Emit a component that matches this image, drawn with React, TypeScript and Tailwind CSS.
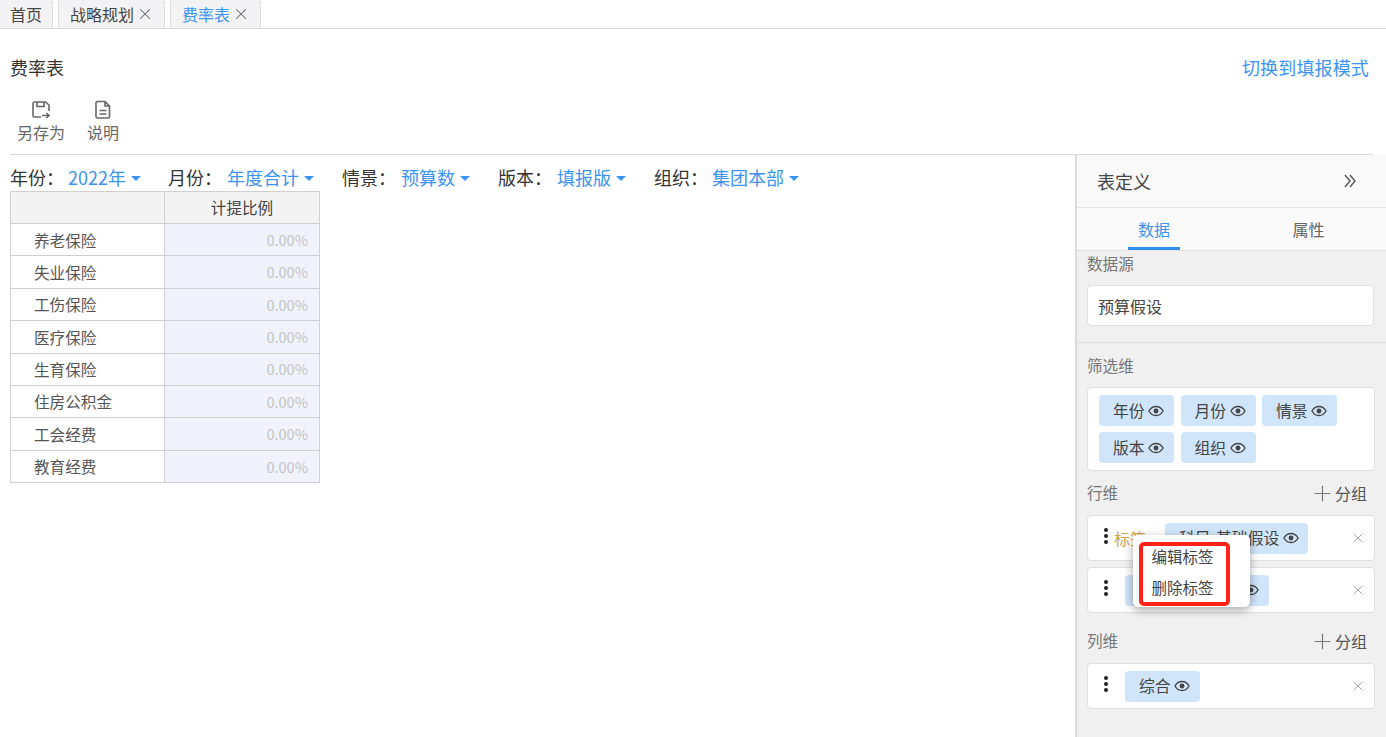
import { Plus, X } from "lucide-react";

const rows = ["养老保险", "失业保险", "工伤保险", "医疗保险", "生育保险", "住房公积金", "工会经费", "教育经费"];
const filters = [
  { label: "年份", value: "2022年", cls: "mr-[27px]", lw: "w-[58px]" },
  { label: "月份", value: "年度合计", cls: "mr-[28px]", lw: "w-[59px]" },
  { label: "情景", value: "预算数", cls: "mr-[28px]", lw: "w-[59px]" },
  { label: "版本", value: "填报版", cls: "mr-[28px]", lw: "w-[59px]" },
  { label: "组织", value: "集团本部", cls: "", lw: "w-[58px]" },
];

function EyeIcon() {
  return (
    <svg width="16" height="16" viewBox="0 0 17 17" fill="none" className="shrink-0">
      <path d="M1 8.500C2.800 5.300 5.400 3.700 8.500 3.700S14.200 5.300 16 8.500C14.200 11.700 11.600 13.300 8.500 13.300S2.800 11.700 1 8.500Z" stroke="#444" strokeWidth="1.400" />
      <circle cx="8.500" cy="8.500" r="2.600" fill="#444" />
    </svg>
  );
}

function Chip({ label, className = "" }: { label: string; className?: string }) {
  return (
    <span className={`flex h-[31px] shrink-0 items-center gap-[3.500px] rounded-[4px] bg-[#d0e5fa] pl-[14px] text-[15.800px] text-[#444] ${className}`}>
      {label}
      <EyeIcon />
    </span>
  );
}

function Dots() {
  return (
    <div className="flex w-[6px] flex-col items-center gap-[2px]">
      <i className="h-[4px] w-[4px] rounded-full bg-[#222]" />
      <i className="h-[4px] w-[4px] rounded-full bg-[#222]" />
      <i className="h-[4px] w-[4px] rounded-full bg-[#222]" />
    </div>
  );
}

function GroupHeader({ title }: { title: string }) {
  return (
    <div className="flex h-[30px] items-center justify-between pr-[8px]">
      <span className="text-[15.600px] text-[#777]">{title}</span>
      <span className="flex items-center text-[16px] text-[#555]">
        <Plus size={25} strokeWidth={1.1} className="text-[#777]" />
        分组
      </span>
    </div>
  );
}

function DimRow({ children, className = "" }: { children: React.ReactNode; className?: string }) {
  return (
    <div className={`flex h-[46px] items-center rounded-[4px] border border-[#e0e0e0] bg-white pl-[15px] pr-[8px] ${className}`}>
      <div className="mb-[5px] mr-[2px]">
        <Dots />
      </div>
      <div className="flex flex-1 items-center">{children}</div>
      <X size={16} strokeWidth={1.5} className="text-[#aaa]" />
    </div>
  );
}

export default function App() {
  return (
    <div className="relative flex h-[737px] w-[1386px] flex-col overflow-hidden bg-white font-['Noto_Sans_CJK_SC','Noto_Sans',sans-serif] text-[#444]">
      {/* tabs */}
      <div className="flex h-[29px] items-stretch border-b border-[#d9d9d9] text-[16px]">
        <div className="mr-[5px] flex w-[53px] items-center rounded-tr-[3px] border-r border-[#ddd] bg-[#f3f3f5] pl-[10px]">首页</div>
        <div className="mr-[5px] flex w-[107px] items-center gap-[2px] rounded-t-[3px] border-x border-[#ddd] bg-[#f3f3f5] pl-[11px]">
          战略规划
          <X size={18} strokeWidth={1.4} className="text-[#666]" />
        </div>
        <div className="flex w-[91px] items-center gap-[2px] rounded-t-[3px] border-x border-[#ddd] bg-[#f3f3f5] pl-[11px] text-[#3b94f0]">
          费率表
          <X size={18} strokeWidth={1.4} className="text-[#666]" />
        </div>
      </div>

      {/* title */}
      <div className="flex h-[78px] items-start justify-between pl-[10px] pr-[17px] pt-[25px] text-[18px] leading-[26px]">
        <span className="text-[#333]">费率表</span>
        <span className="tracking-[0.15px] text-[#3b94f0]">切换到填报模式</span>
      </div>

      {/* toolbar */}
      <div className="ml-[10px] mr-[13px] flex h-[48px] items-start gap-[22px] border-b border-[#d9d9d9] pl-[7px] text-[16px] leading-[22px] text-[#666]">
        <div className="flex flex-col items-center">
          <svg width="20" height="20" viewBox="0 0 20 20" fill="none" stroke="#666" strokeWidth="1.600" className="-mt-[7px] mb-[1px]">
            <path d="M10 17H3.500A1.500 1.500 0 0 1 2 15.500V3.500A1.500 1.500 0 0 1 3.500 2h11L18 5v6" />
            <path d="M6 2v4.500h7V2" />
            <path d="M11 15.500h7M15.500 13l2.500 2.500-2.500 2.500" />
          </svg>
          <span>另存为</span>
        </div>
        <div className="flex flex-col items-center">
          <svg width="20" height="20" viewBox="0 0 20 20" fill="none" stroke="#666" strokeWidth="1.600" className="-mt-[7px] mb-[1px]">
            <path d="M4.500 1.500h7.500l4.500 4.500v10.500a1.500 1.500 0 0 1-1.500 1.500H4.500A1.500 1.500 0 0 1 3 16.500v-13.500a1.500 1.500 0 0 1 1.500-1.500z" />
            <path d="M12 1.500V6h4.500M6.500 10.500h7M6.500 14h7" />
          </svg>
          <span>说明</span>
        </div>
      </div>

      {/* body */}
      <div className="flex min-h-0 flex-1">
        <div className="flex-1 pl-[10px]">
          <div className="flex h-[36px] items-center pt-[8px] text-[18px]">
            {filters.map((f) => (
              <div key={f.label} className={`flex items-center ${f.cls}`}>
                <span className={`${f.lw} text-[#333]`}>{f.label}：</span>
                <span className="text-[#3b94f0]">{f.value}</span>
                <span className="ml-[5px] mt-[2px] h-0 w-0 border-x-[5px] border-t-[5px] border-x-transparent border-t-[#3b94f0]" />
              </div>
            ))}
          </div>
          <div className="grid w-[310px] grid-cols-[154px_155px] border-l border-t border-[#d0d0d0]">
            <div className="h-[32px] border-b border-r border-[#d0d0d0] bg-[#f3f3f3]" />
            <div className="flex h-[32px] items-center justify-center border-b border-r border-[#d0d0d0] bg-[#f3f3f3] text-[15.600px]">计提比例</div>
            {rows.map((r) => (
              <div key={r} className="contents">
                <div className="flex h-[32.400px] items-center border-b border-r border-[#d0d0d0] pl-[23px] pt-[1px] text-[15.600px] text-[#555]">{r}</div>
                <div className="flex h-[32.400px] items-center justify-end border-b border-r border-[#d0d0d0] bg-[#f0f3fc] pr-[11px] text-[14.500px] text-[#c4c4c4]">0.00%</div>
              </div>
            ))}
          </div>
        </div>

        {/* side panel */}
        <div className="flex w-[311px] flex-col border-l-2 border-[#dcdcdc] bg-[#f0f0f0]">
          <div className="flex h-[53px] items-center justify-between border-b border-[#e2e2e2] bg-[#f9f9f9] pl-[20px] pr-[30px] text-[18px] text-[#444]">
            表定义
            <svg width="12" height="14" viewBox="0 0 12 14" fill="none" stroke="#555" strokeWidth="1.400">
              <path d="M1 1l5 6-5 6M6 1l5 6-5 6" />
            </svg>
          </div>
          <div className="flex h-[43px] border-b border-[#e2e2e2] bg-[#fafafa] text-[16px]">
            <div className="relative flex w-[154px] items-center justify-center text-[#3b94f0]">
              数据
              <span className="absolute bottom-0 left-[51px] h-[3px] w-[52px] bg-[#2f8fee]" />
            </div>
            <div className="flex flex-1 items-center justify-center text-[#666]">属性</div>
          </div>
          <div className="border-b border-[#dcdcdc] px-[10px] pb-[16px]">
            <div className="h-[34px] text-[15.600px] leading-[25px] text-[#777]">数据源</div>
            <div className="flex h-[41px] w-[287px] items-center rounded-[4px] border border-[#e0e0e0] bg-white pl-[10px] pt-[1px] text-[16px]">预算假设</div>
          </div>
          <div className="px-[10px] pr-[11px]">
            <div className="flex h-[44px] items-center pt-[2px] text-[15.600px] text-[#777]">筛选维</div>
            <div className="flex h-[84px] flex-wrap content-start gap-x-[6.500px] gap-y-[6px] rounded-[4px] border border-[#e0e0e0] bg-white pl-[11px] pt-[7px]">
              <Chip label="年份" className="w-[75px]" />
              <Chip label="月份" className="w-[75px]" />
              <Chip label="情景" className="w-[75px]" />
              <Chip label="版本" className="w-[75px]" />
              <Chip label="组织" className="w-[75px]" />
            </div>
            <div className="mt-[7px]">
              <GroupHeader title="行维" />
            </div>
            <DimRow className="mt-[7px]">
              <span className="ml-[3px] w-[51px] shrink-0 text-[16px] text-[#cfa24a]">标签:</span>
              <Chip label="科目-基础假设" className="w-[143px]" />
            </DimRow>
            <DimRow className="mt-[6px]">
              <Chip label="科目-计提比例" className="ml-[14px] w-[144px]" />
            </DimRow>
            <div className="mt-[13px]">
              <GroupHeader title="列维" />
            </div>
            <DimRow className="mt-[7px]">
              <Chip label="综合" className="ml-[14px] w-[75px]" />
            </DimRow>
          </div>
        </div>
      </div>

      {/* context menu */}
      <div className="absolute left-[1133px] top-[535px] h-[72px] w-[117px] rounded-[5px] bg-white shadow-[0_3px_10px_rgba(0,0,0,0.35)]">
        <div className="absolute left-[6px] top-[7px] flex h-[64px] w-[91px] flex-col items-center gap-[7px] rounded-[5px] border-[4px] border-[#ff2218] pr-[4px] text-[15.500px] leading-[24px] text-[#444]">
          <span className="-mt-[2px]">编辑标签</span>
          <span>删除标签</span>
        </div>
      </div>
    </div>
  );
}
